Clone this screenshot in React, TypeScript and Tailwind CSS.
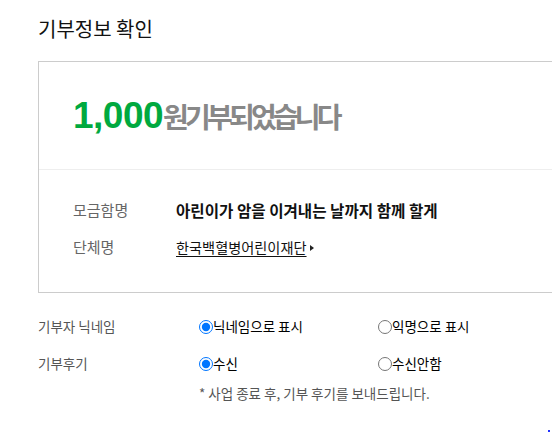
import React from "react";

const KR = { fontFamily: '"Noto Sans CJK KR", "Noto Sans", sans-serif' };

export default function App() {
  return (
    <div
      className="relative w-[552px] h-[434px] overflow-hidden bg-white text-black"
      style={KR}
    >
      <div className="pl-[38px] pt-[16px]">
        <h1 className="text-[20px] leading-[26px] font-normal text-[#111]">기부정보 확인</h1>

        <div className="mt-[19px] w-[600px] border border-[#cccccc]">
          <div className="h-[108px] flex items-center pl-[34px] border-b border-[#eeeeee]">
            <span
              className="text-[37px] font-bold leading-none text-[#00a93f] tracking-[-0.5px]"
              style={{ fontFamily: '"Liberation Sans", Arial, sans-serif' }}
            >
              1,000
            </span>
            <span className="text-[28px] font-bold leading-none text-[#888888] tracking-[-3.8px]">
              원기부되었습니다
            </span>
          </div>
          <div className="pt-[22px] pb-[26px] pl-[34px]">
            <div className="h-[37px] flex items-center">
              <span className="w-[103px] text-[15px] text-[#666666]">모금함명</span>
              <span className="text-[15.6px] font-bold text-[#111]">
                아린이가 암을 이겨내는 날까지 함께 할게
              </span>
            </div>
            <div className="h-[37px] flex items-center">
              <span className="w-[103px] text-[15px] text-[#666666]">단체명</span>
              <span className="text-[14.2px] text-[#111] underline underline-offset-[3px]">
                한국백혈병어린이재단
              </span>
              <svg width="6" height="8" viewBox="0 0 6 8" className="ml-[2px]">
                <path d="M1 1 L5 4 L1 7 Z" fill="#222" />
              </svg>
            </div>
          </div>
        </div>

        <div className="mt-[15px] text-[13.5px]">
          <div className="h-[37px] flex items-center">
            <span className="w-[161px] text-[#555555]">기부자 닉네임</span>
            <label className="w-[179px] flex items-center">
              <input type="radio" name="nick" defaultChecked className="m-0 w-[14px] h-[14px]" />
              <span>닉네임으로 표시</span>
            </label>
            <label className="flex items-center">
              <input type="radio" name="nick" className="m-0 w-[14px] h-[14px]" />
              <span>익명으로 표시</span>
            </label>
          </div>
          <div className="h-[37px] flex items-center">
            <span className="w-[161px] text-[#555555]">기부후기</span>
            <label className="w-[179px] flex items-center">
              <input type="radio" name="review" defaultChecked className="m-0 w-[14px] h-[14px]" />
              <span>수신</span>
            </label>
            <label className="flex items-center">
              <input type="radio" name="review" className="m-0 w-[14px] h-[14px]" />
              <span>수신안함</span>
            </label>
          </div>
          <div className="h-[22px] flex items-center pl-[161px] text-[#555555]">
            * 사업 종료 후, 기부 후기를 보내드립니다.
          </div>
        </div>
      </div>
      <div className="absolute left-[548px] top-[430px] w-[2px] h-[2px] bg-[#2233ff]" />
    </div>
  );
}
